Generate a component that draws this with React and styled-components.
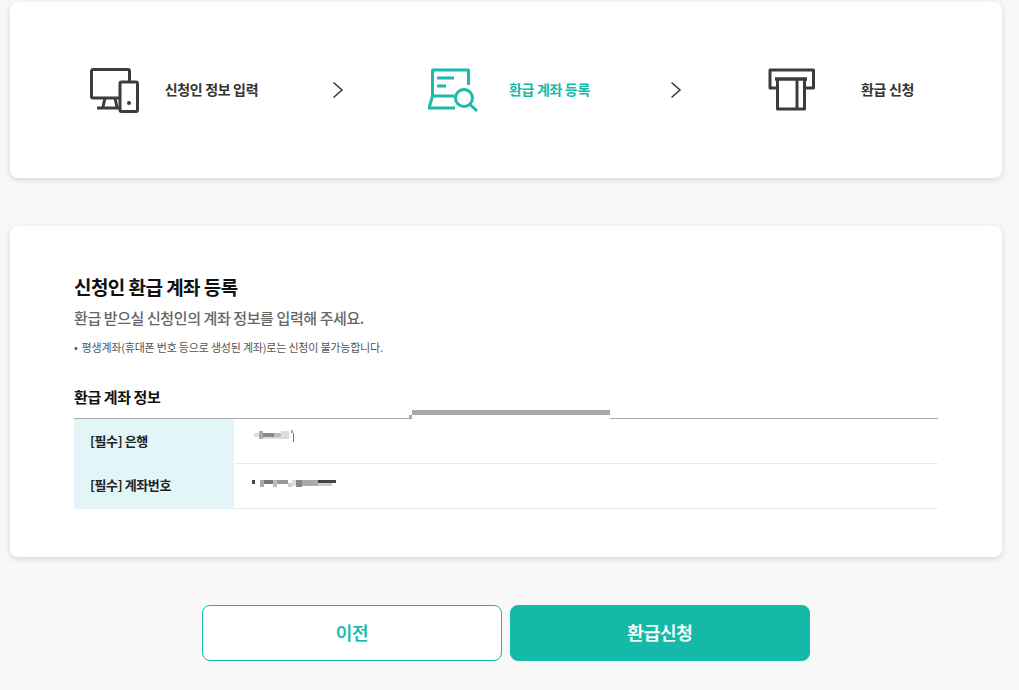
import React from 'react';
import styled, { createGlobalStyle } from 'styled-components';

const GlobalStyle = createGlobalStyle`
  * { box-sizing: border-box; }
  html, body { margin: 0; padding: 0; background: #f8f8f8; }
  body { font-family: "Noto Sans CJK KR", "Noto Sans", sans-serif; color: #111; overflow: hidden; }
`;

const Page = styled.div`
  width: 1019px;
  height: 690px;
  padding: 2px 17px 0 10px;
`;

const Card = styled.section`
  background: #fff;
  border-radius: 8px;
  box-shadow: 0 2px 6px rgba(0, 0, 0, 0.14);
`;

const StepCard = styled(Card)`
  height: 176px;
  padding: 64px 0 0 80px;
  display: grid;
  grid-template-columns: 338px 340px 1fr;
  align-content: start;
`;

const Step = styled.div`
  display: flex;
  align-items: center;
  height: 48px;
`;

const IconBox = styled.div`
  width: ${p => p.$w || 50}px;
  height: 48px;
  flex: none;
  color: ${p => (p.$active ? '#1bbaaa' : '#3c3c3c')};
  svg { display: block; }
`;

const StepLabel = styled.div`
  width: 142px;
  padding: 0 0 2px 1px;
  text-align: center;
  font-size: 14px;
  font-weight: 700;
  letter-spacing: -0.35px;
  color: ${p => (p.$active ? '#15b9a8' : '#333')};
`;

const Chevron = styled.svg`
  margin-left: 50px;
  flex: none;
`;

const InfoCard = styled(Card)`
  height: 331px;
  margin-top: 48px;
  padding: 47px 64px 0;
`;

const Title = styled.h2`
  margin: 0;
  font-size: 19px;
  line-height: 27px;
  font-weight: 700;
  letter-spacing: -0.55px;
  color: #111;
`;

const Lead = styled.p`
  margin: 7px 0 0;
  font-size: 15px;
  line-height: 22px;
  font-weight: 500;
  letter-spacing: -0.4px;
  color: #666;
`;

const Note = styled.p`
  margin: 10px 0 0;
  font-size: 11px;
  line-height: 16px;
  letter-spacing: -0.2px;
  color: #555;
  &::before { content: '•'; margin-right: 4px; }
`;

const SectionHead = styled.h3`
  margin: 31px 0 0;
  font-size: 15px;
  line-height: 22px;
  font-weight: 700;
  letter-spacing: -0.4px;
  color: #111;
`;

const Table = styled.div`
  position: relative;
  margin-top: 10px;
  border-top: 1px solid #aaa;
`;

const MaskBar = styled.div`
  position: absolute;
  left: 338px;
  top: -9px;
  width: 198px;
  height: 5px;
  background: #a9a9a9;
`;

const MaskGap = styled.div`
  position: absolute;
  left: 335px;
  top: -4px;
  width: 201px;
  height: 4px;
  background: linear-gradient(90deg, #a9a9a9 3px, #fff 3px);
  &::after {
    content: '';
    position: absolute;
    left: 0;
    top: 4px;
    width: 100%;
    height: 1px;
    background: #fff;
  }
`;

const Row = styled.div`
  display: grid;
  grid-template-columns: 160px 1fr;
  height: ${p => p.$h}px;
  border-bottom: 1px solid #eaeaea;
`;

const HeadCell = styled.div`
  background: #e2f6f8;
  padding: ${p => p.$top}px 0 0 16px;
  font-size: 13px;
  line-height: 18px;
  font-weight: 700;
  letter-spacing: -0.4px;
  color: #222;
  margin-bottom: -1px;
`;

const ValueCell = styled.div`
  padding: ${p => p.$top}px 0 0 ${p => p.$left}px;
  svg { display: block; }
`;

const Buttons = styled.div`
  display: flex;
  justify-content: center;
  gap: 8px;
  margin-top: 48px;
`;

const Button = styled.button`
  width: 300px;
  height: 56px;
  border-radius: 8px;
  border: 1px solid #15b9a8;
  background: ${p => (p.$primary ? '#15b9a8' : '#fff')};
  color: ${p => (p.$primary ? '#fff' : '#15b9a8')};
  font-family: inherit;
  font-size: 18px;
  font-weight: 500;
  letter-spacing: -0.2px;
  -webkit-text-stroke: 0.25px currentColor;
  padding: 0 0 3px;
`;

const MonitorIcon = () => (
  <svg width="50" height="48" viewBox="0 0 50 48" fill="none" stroke="currentColor" strokeWidth="3" strokeLinejoin="round">
    <path d="M29 32H3a1.500 1.500 0 0 1-1.500-1.500V5a1.500 1.500 0 0 1 1.500-1.500h35a1.500 1.500 0 0 1 1.500 1.500V15" />
    <rect x="30" y="16" width="17.500" height="29.500" rx="1.500" />
    <path d="M15 32l-2 9M25 32l2 9M7 42h23" />
    <circle cx="39" cy="37" r="2" fill="currentColor" stroke="none" />
  </svg>
);

const SearchDocIcon = () => (
  <svg width="50" height="48" viewBox="0 0 50 48" fill="none" stroke="currentColor" strokeWidth="3" strokeLinejoin="round">
    <path d="M4.500 30V4h36v15" />
    <path d="M9 12h17M9 20h9" />
    <path d="M4.500 30L1 42h26M4.500 30h22" />
    <circle cx="36" cy="32" r="8.500" />
    <path d="M42 38.500l7 6.500" />
  </svg>
);

const AtmIcon = () => (
  <svg width="50" height="48" viewBox="0 0 50 48" fill="none" stroke="currentColor" strokeWidth="3" strokeLinejoin="round">
    <path d="M8 22H2V4h43.500v18H38" />
    <path d="M7 13h32" strokeWidth="3.500" />
    <path d="M9.500 13v30h27V13M29 13v30" />
  </svg>
);

const NextIcon = () => (
  <Chevron width="12" height="18" viewBox="0 0 12 18" fill="none" stroke="#333" strokeWidth="1.500">
    <path d="M1.500 1.500L10 9l-8.500 7.500" />
  </Chevron>
);

// 가려진 값 (모자이크)
const BankMask = () => (
  <svg width="42" height="16" viewBox="0 0 42 16">
    <rect x="0" y="5" width="5" height="4" fill="#ddd" />
    <rect x="5" y="3" width="4" height="8" fill="#aaa" />
    <rect x="9" y="5" width="11" height="4" fill="#888" />
    <rect x="9" y="9" width="18" height="2" fill="#ddd" />
    <rect x="20" y="5" width="7" height="4" fill="#bbb" />
    <rect x="27" y="3" width="8" height="8" fill="#dcdcdc" />
    <rect x="37" y="2" width="2" height="3" fill="#aaa" />
    <rect x="39" y="5" width="1" height="9" fill="#777" />
  </svg>
);

const AccountMask = () => (
  <svg width="84" height="8" viewBox="0 0 84 8">
    <rect x="0" y="0" width="3" height="4" fill="#444" />
    <rect x="8" y="0" width="4" height="7" fill="#aaa" />
    <rect x="12" y="0" width="9" height="4" fill="#777" />
    <rect x="21" y="0" width="4" height="7" fill="#bbb" />
    <rect x="25" y="0" width="11" height="4" fill="#999" />
    <rect x="36" y="3" width="4" height="4" fill="#ccc" />
    <rect x="40" y="0" width="4" height="6" fill="#ddd" />
    <rect x="44" y="0" width="6" height="7" fill="#888" />
    <rect x="50" y="0" width="16" height="6" fill="#aaa" />
    <rect x="66" y="0" width="18" height="3" fill="#444" />
    <rect x="66" y="3" width="14" height="3" fill="#ccc" />
  </svg>
);

export default function App() {
  return (
    <>
      <GlobalStyle />
      <Page>
        <StepCard>
          <Step>
            <IconBox><MonitorIcon /></IconBox>
            <StepLabel>신청인 정보 입력</StepLabel>
            <NextIcon />
          </Step>
          <Step>
            <IconBox $active><SearchDocIcon /></IconBox>
            <StepLabel $active>환급 계좌 등록</StepLabel>
            <NextIcon />
          </Step>
          <Step>
            <IconBox $w={48}><AtmIcon /></IconBox>
            <StepLabel>환급 신청</StepLabel>
          </Step>
        </StepCard>

        <InfoCard>
          <Title>신청인 환급 계좌 등록</Title>
          <Lead>환급 받으실 신청인의 계좌 정보를 입력해 주세요.</Lead>
          <Note>평생계좌(휴대폰 번호 등으로 생성된 계좌)로는 신청이 불가능합니다.</Note>
          <SectionHead>환급 계좌 정보</SectionHead>
          <Table>
            <MaskBar />
            <MaskGap />
            <Row $h={45}>
              <HeadCell $top={13}>[필수] 은행</HeadCell>
              <ValueCell $top={9} $left={20}><BankMask /></ValueCell>
            </Row>
            <Row $h={45}>
              <HeadCell $top={12}>[필수] 계좌번호</HeadCell>
              <ValueCell $top={16} $left={18}><AccountMask /></ValueCell>
            </Row>
          </Table>
        </InfoCard>

        <Buttons>
          <Button>이전</Button>
          <Button $primary>환급신청</Button>
        </Buttons>
      </Page>
    </>
  );
}
